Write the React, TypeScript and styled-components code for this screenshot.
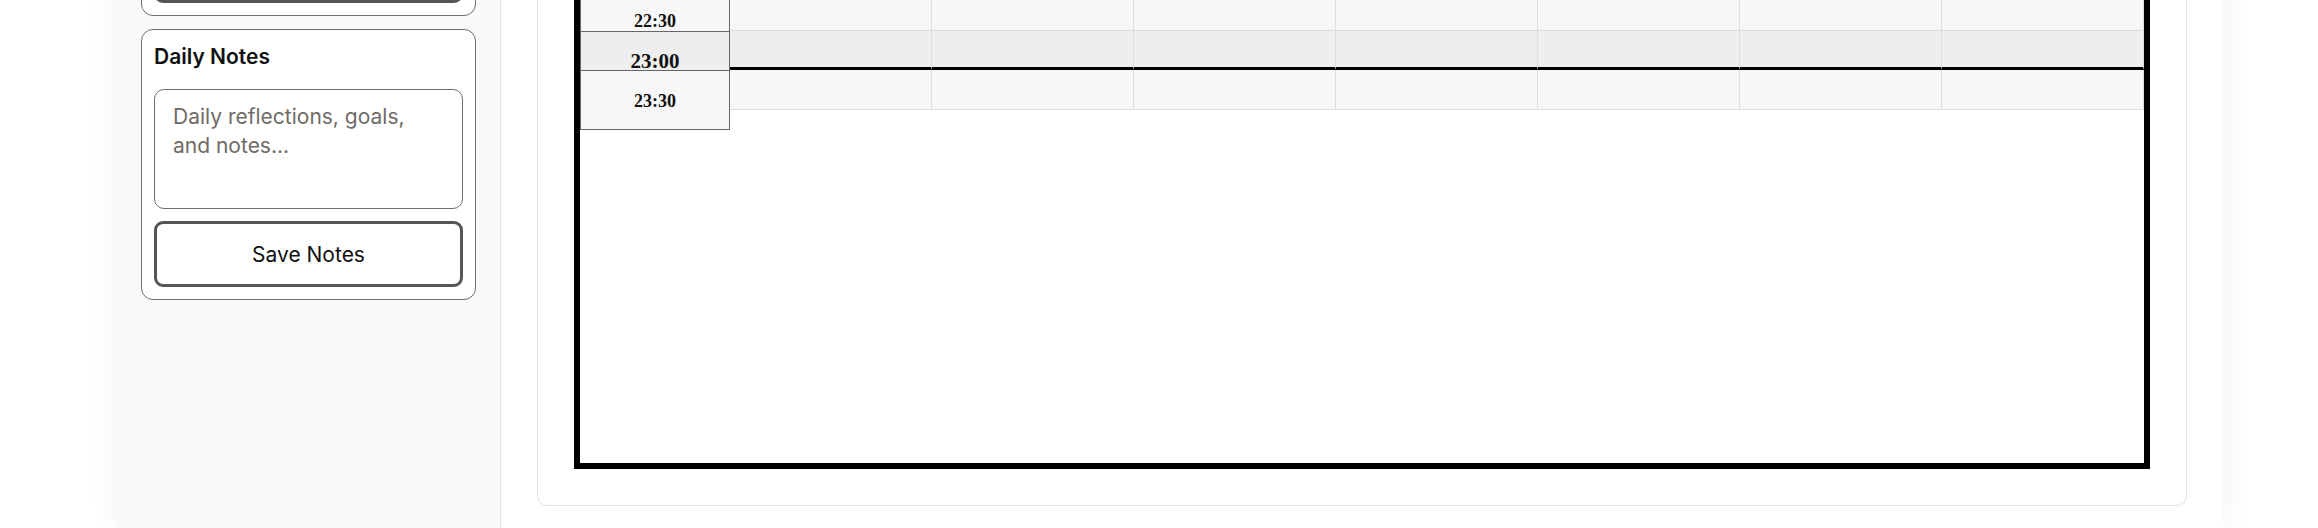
import React from "react";
import styled, { createGlobalStyle } from "styled-components";

const GlobalStyle = createGlobalStyle`
  html, body {
    margin: 0;
    padding: 0;
    background: #fff;
    overflow: hidden;
  }
  body {
    font-family: Inter, "Noto Sans", sans-serif;
    color: #111;
  }
  * {
    box-sizing: border-box;
  }
`;

const DAYS = ["mon", "tue", "wed", "thu", "fri", "sat", "sun"];

// the page is scrolled to the end of the day, only the last slots are shown
const SLOTS = [
  { label: "22:30", hour: false },
  { label: "23:00", hour: true },
  { label: "23:30", hour: false },
];

const Viewport = styled.div`
  height: 528px;
  overflow: hidden;
`;

const Shell = styled.div`
  display: flex;
  width: 2106px;
  height: 628px;
  margin: -100px 0 0 117px;
  background: #fff;
  box-shadow: 0 0 30px rgba(0, 0, 0, 0.06);
`;

const Sidebar = styled.aside`
  width: 384px;
  flex-shrink: 0;
  background: #f8f9fa;
  border-right: 1px solid #e3e5e8;
  padding: 24px;
  display: flex;
  flex-direction: column;
  gap: 13px;
`;

const Panel = styled.section`
  background: #fff;
  border: 1px solid #6e6e6e;
  border-radius: 12px;
  padding: 12px;
  display: flex;
  flex-direction: column;
`;

const PanelTitle = styled.h3`
  margin: 0 0 17px;
  font-size: 21px;
  font-weight: 600;
  line-height: 30px;
  color: #111;
`;

const NotesInput = styled.textarea`
  display: block;
  width: 100%;
  height: 120px;
  margin: 0 0 12px;
  padding: 12px 18px;
  border: 1px solid #6e6e6e;
  border-radius: 10px;
  resize: none;
  outline: none;
  font-family: Inter, sans-serif;
  font-size: 21px;
  line-height: 29px;
  color: #222;

  &::placeholder {
    color: #6f6b68;
  }
`;

const OutlineButton = styled.button`
  display: block;
  width: 100%;
  height: 66px;
  border: 3px solid #555;
  border-radius: 9px;
  background: #fff;
  font-family: Inter, sans-serif;
  font-size: 21px;
  font-weight: 400;
  color: #111;
  cursor: pointer;
`;

const Main = styled.main`
  flex: 1;
  min-width: 0;
  padding: 49px 36px 22px;
  display: flex;
  flex-direction: column;
`;

const ScheduleCard = styled.div`
  background: #fff;
  border: 1px solid #e2e2e2;
  border-radius: 10px;
  padding: 36px;
`;

const Calendar = styled.div`
  height: 483px;
  border: 6px solid #000;
  background: #fff;
  display: flex;
  align-items: flex-start;
  overflow: hidden;
`;

const TimeColumn = styled.div`
  width: 150px;
  flex-shrink: 0;
  margin-top: 1px;
`;

const TimeCell = styled.div<{ $hour?: boolean; $last?: boolean }>`
  height: ${(p) => (p.$last ? 59 : 39)}px;
  padding-top: ${(p) => (p.$last ? 21 : 19)}px;
  border: 1px solid #666;
  border-top: none;
  background: ${(p) => (p.$hour ? "#eeeeee" : "#f7f7f7")};
  font-family: "Liberation Serif", "Times New Roman", serif;
  font-weight: 700;
  font-size: ${(p) => (p.$hour ? 21 : 18)}px;
  line-height: 1;
  text-align: center;
  color: #111;
`;

const DayGrid = styled.div`
  flex: 1;
  min-width: 0;
  margin-top: -1px;
`;

const GridRow = styled.div<{ $hour?: boolean }>`
  display: flex;
  height: ${(p) => (p.$hour ? 39 : 40)}px;
`;

const GridCell = styled.div<{ $hour?: boolean }>`
  flex: 1;
  border-right: 1px solid #dddddd;
  border-bottom: ${(p) => (p.$hour ? "3px solid #000" : "1px solid #dddddd")};
  background: ${(p) => (p.$hour ? "#eeeeee" : "#f7f7f7")};
`;

export default function App() {
  return (
    <Viewport>
      <GlobalStyle />
      <Shell>
        <Sidebar>
          <Panel>
            <OutlineButton aria-label="Add task" />
          </Panel>
          <Panel>
            <PanelTitle>Daily Notes</PanelTitle>
            <NotesInput placeholder="Daily reflections, goals, and notes..." />
            <OutlineButton>Save Notes</OutlineButton>
          </Panel>
        </Sidebar>

        <Main>
          <ScheduleCard>
            <Calendar>
              <TimeColumn>
                {SLOTS.map((slot, i) => (
                  <TimeCell
                    key={slot.label}
                    $hour={slot.hour}
                    $last={i === SLOTS.length - 1}
                  >
                    {slot.label}
                  </TimeCell>
                ))}
              </TimeColumn>
              <DayGrid>
                {SLOTS.map((slot) => (
                  <GridRow key={slot.label} $hour={slot.hour}>
                    {DAYS.map((d) => (
                      <GridCell key={d} $hour={slot.hour} />
                    ))}
                  </GridRow>
                ))}
              </DayGrid>
            </Calendar>
          </ScheduleCard>
        </Main>
      </Shell>
    </Viewport>
  );
}
